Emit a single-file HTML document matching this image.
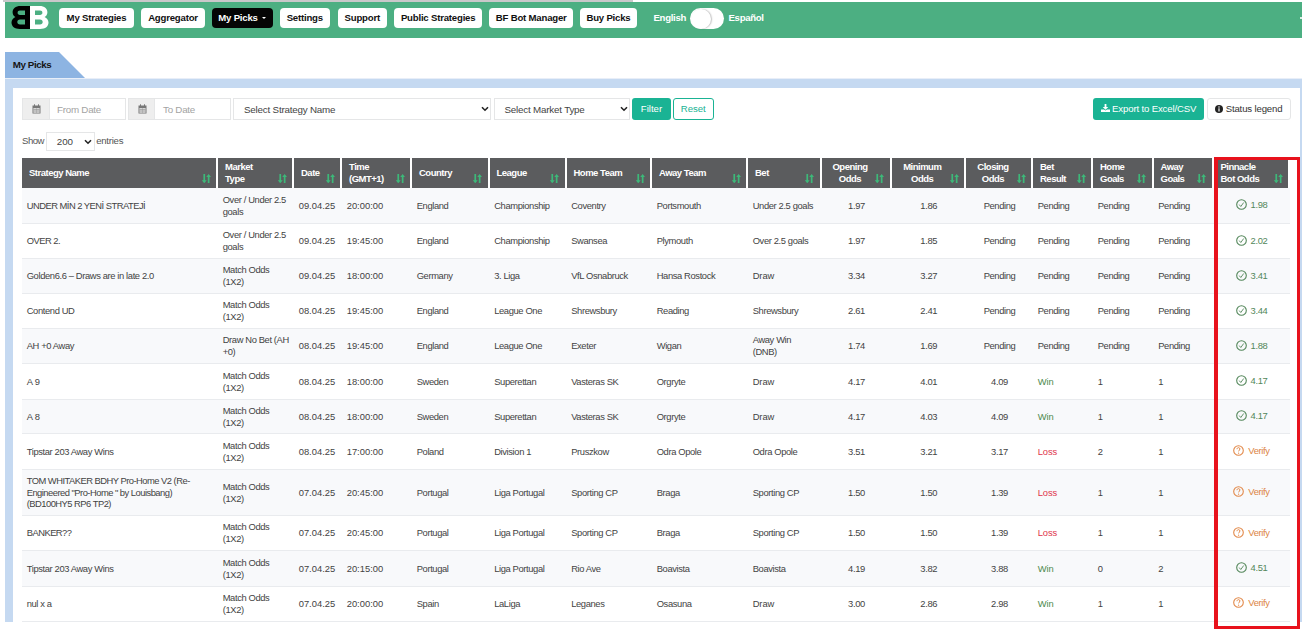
<!DOCTYPE html>
<html><head><meta charset="utf-8"><style>
*{box-sizing:border-box;margin:0;padding:0}
html,body{width:1308px;height:638px;overflow:hidden;background:#fff;font-family:"Liberation Sans",sans-serif;color:#555}
.abs{position:absolute}
#topbar{left:3px;top:0;width:630px;height:2px;background:#c9c8ca}
#nav{left:5px;top:2px;width:1297px;height:36px;background:#4caf82}
.nb{position:absolute;top:6px;height:20.5px;background:#fff;border-radius:4px;color:#111;font-weight:bold;font-size:9.6px;line-height:20.6px;text-align:center;letter-spacing:-0.2px}
.nb.act{background:#050505;color:#fff}
.lang{position:absolute;top:6px;color:#fff;font-weight:bold;font-size:9.6px;line-height:20px;letter-spacing:-0.3px}
#tog{left:685px;top:6.2px;width:33.5px;height:20.8px;border-radius:11px;background:#fff}
#knob{left:685.5px;top:6.5px;width:20px;height:20.2px;border-radius:50%;background:#fff;box-shadow:1px 0 1.5px rgba(0,0,0,.25)}
#tab{left:5px;top:52px;width:80px;height:26px;background:#8db4e2;clip-path:polygon(0 0,54px 0,80px 26px,0 26px)}
#tabt{left:12.7px;top:51.8px;line-height:26px;font-size:9.8px;font-weight:bold;color:#151515;letter-spacing:-0.4px}
#panel{left:5px;top:79px;width:1297px;height:560px;border-left:8px solid #c5d9f1;border-top:9px solid #c5d9f1;border-right:2px solid #c5d9f1;background:#fff}
#pbot{left:5px;top:622px;width:1297px;height:20px;background:#fff}
.ig{position:absolute;top:98px;height:22px;border:1px solid #e5e6e7;background:#fff}
.ad{position:absolute;left:0;top:0;bottom:0;background:#eee;border-right:1px solid #e5e6e7}
.ph{position:absolute;top:0;line-height:21.2px;font-size:9.8px;color:#a3a3a3;letter-spacing:-0.25px}
.sel{position:absolute;top:98px;height:22px;border:1px solid #e5e6e7;background:#fff;font-size:9.8px;color:#444;line-height:21.4px;letter-spacing:-0.2px}
.chev{position:absolute;top:7px;line-height:0}.chev svg{display:block}
.btn{position:absolute;top:98.3px;height:21.3px;border-radius:3px;font-size:9.6px;line-height:21.6px;text-align:center}
.tbl{position:absolute;left:22px;top:158px;width:1268px}
.hc{position:absolute;top:158px;height:30px;background:#5b5c5e;color:#fff;font-weight:bold;font-size:9.5px;line-height:12.2px;border-right:2px solid #fff;letter-spacing:-0.5px}
.hc .t{position:absolute;left:7px;top:2.9px}
.hc .t1{position:absolute;left:7px;top:9.3px}
.hc .si{position:absolute;right:5.2px;bottom:4.6px}
.row{position:absolute;left:22px;width:1268px;border-bottom:1px solid #e9ebee}
.row.odd{background:#f8f9fb}
.c{position:absolute;top:0;bottom:0;display:flex;align-items:center;font-size:9.4px;line-height:11.8px;padding-left:4.7px;padding-top:0.2px;color:#434343;letter-spacing:-0.35px}
.c.num{letter-spacing:0}
.c.ctr{letter-spacing:-0.3px}
.c.ctr{justify-content:center;padding-left:0;text-align:center}
.win{color:#4d8a4e}.loss{color:#e0334c}
.pk{justify-content:center;padding-left:0}
.pk svg{margin-right:3.4px;position:relative;top:-0.5px;left:-0.5px}
.pk{margin-top:-1px}
.okv{color:#53875a}.vv{color:#dc8444}
#red{left:1213.9px;top:156.7px;width:86px;height:471.9px;border-style:solid;border-color:#e8121c;border-width:3.5px 3.7px 3.7px 4.1px}
</style></head><body>
<div class="abs" id="topbar"></div>
<div class="abs" id="nav"></div>

<svg class="abs" style="left:11px;top:5.5px" width="38" height="23" viewBox="0 0 38 23">
<path d="M19 0H9.5C4.5 0 1.6 2.6 1.6 6.2c0 2.3 1.2 3.9 2.8 4.8C2.2 12 .5 14 .5 16.6c0 3.8 3 6.4 8.4 6.4H19z M9 4.5h5v4.4H9c-1.5 0-2.4-.9-2.4-2.2S7.5 4.5 9 4.5z M9 13.6h5v4.9H9c-1.7 0-2.7-1-2.7-2.45S7.3 13.6 9 13.6z" fill="#000" fill-rule="evenodd"/>
<path d="M19 0h9.5c5 0 7.9 2.6 7.9 6.2 0 2.3-1.2 3.9-2.8 4.8 2.2 1 3.9 3 3.9 5.6 0 3.8-3 6.4-8.4 6.4H19z M29 4.5h-5v4.4h5c1.5 0 2.4-.9 2.4-2.2S30.5 4.5 29 4.5z M29 13.6h-5v4.9h5c1.7 0 2.7-1 2.7-2.45S30.7 13.6 29 13.6z" fill="#fff" fill-rule="evenodd"/>
</svg>

<div class="nb" style="left:59px;top:7.6px;width:75px">My Strategies</div>
<div class="nb" style="left:141px;top:7.6px;width:64px">Aggregator</div>
<div class="nb act" style="left:212px;top:7.6px;width:60.5px">My Picks<span style="display:inline-block;width:0;height:0;border-left:2.2px solid transparent;border-right:2.2px solid transparent;border-top:2.6px solid #fff;margin-left:4.5px;vertical-align:1.8px"></span></div>
<div class="nb" style="left:279.5px;top:7.6px;width:50.5px">Settings</div>
<div class="nb" style="left:337.5px;top:7.6px;width:49.5px">Support</div>
<div class="nb" style="left:394px;top:7.6px;width:88.3px">Public Strategies</div>
<div class="nb" style="left:489.3px;top:7.6px;width:83.9px">BF Bot Manager</div>
<div class="nb" style="left:580.3px;top:7.6px;width:56.3px">Buy Picks</div>
<div class="lang" style="left:653.5px;top:8px">English</div>
<div class="abs" id="tog" style="left:690px;top:8.2px"></div><div class="abs" id="knob" style="left:690.5px;top:8.5px"></div>
<div class="lang" style="left:728.5px;top:8px">Español</div>
<div class="abs" style="left:1299.8px;top:17.3px;width:2.2px;height:1.8px;background:rgba(255,255,255,.8)"></div>
<div class="abs" id="tab"></div><div class="abs" id="tabt">My Picks</div>
<div class="abs" style="left:5px;top:78px;width:1297px;height:1px;background:#e8eef8"></div>
<div class="abs" id="panel"></div><div class="abs" id="pbot"></div>
<div class="ig" style="left:22px;width:103.5px"><div class="ad" style="width:26.5px"><span style="position:absolute;left:8.5px;top:5px;line-height:0"><svg width="9" height="10" viewBox="0 0 9 10"><rect x=".5" y="1.5" width="8" height="8" fill="#777"/><rect x="1.5" y="4" width="6" height="4.8" fill="#eee"/><path d="M1.5 5.5h6M1.5 7h6M3 4v5M4.5 4v5M6 4v5" stroke="#888" stroke-width=".5"/><rect x="2" y=".3" width="1" height="2" fill="#777"/><rect x="6" y=".3" width="1" height="2" fill="#777"/></svg></span></div><div class="ph" style="left:34px">From Date</div></div>
<div class="ig" style="left:128px;width:103px"><div class="ad" style="width:26px"><span style="position:absolute;left:8.5px;top:5px;line-height:0"><svg width="9" height="10" viewBox="0 0 9 10"><rect x=".5" y="1.5" width="8" height="8" fill="#777"/><rect x="1.5" y="4" width="6" height="4.8" fill="#eee"/><path d="M1.5 5.5h6M1.5 7h6M3 4v5M4.5 4v5M6 4v5" stroke="#888" stroke-width=".5"/><rect x="2" y=".3" width="1" height="2" fill="#777"/><rect x="6" y=".3" width="1" height="2" fill="#777"/></svg></span></div><div class="ph" style="left:34px">To Date</div></div>
<div class="sel" style="left:233px;width:258px"><span style="position:absolute;left:10px">Select Strategy Name</span><span class="chev" style="left:247px"><svg width="8" height="6" viewBox="0 0 8 6"><path d="M1 1.2l3 3 3-3" fill="none" stroke="#222" stroke-width="1.6"/></svg></span></div>
<div class="sel" style="left:493.5px;width:136.5px"><span style="position:absolute;left:10px">Select Market Type</span><span class="chev" style="left:125px"><svg width="8" height="6" viewBox="0 0 8 6"><path d="M1 1.2l3 3 3-3" fill="none" stroke="#222" stroke-width="1.6"/></svg></span></div>
<div class="btn" style="left:632.2px;width:38.5px;background:#1ab394;color:#fff">Filter</div>
<div class="btn" style="left:672.5px;width:41.5px;border:1px solid #1ab394;color:#1ab394;background:#fff;line-height:19.6px">Reset</div>
<div class="btn" style="left:1093px;width:111.3px;background:#1ab394;color:#fff"><svg width="9" height="8" viewBox="0 0 9 8" style="vertical-align:0px;margin-right:2px"><path d="M3.6 0h1.8v3h1.9L4.5 5.7 1.7 3h1.9z" fill="#fff"/><path d="M0 5.4h3l1.5 1.2L6 5.4h3V8H0z" fill="#fff"/></svg><span style="letter-spacing:-0.15px">Export to Excel/CSV</span></div>
<div class="btn" style="left:1207px;width:83.6px;border:1px solid #e5e6e7;color:#333;background:#fff;line-height:19.8px"><svg width="8" height="8" viewBox="0 0 9 9" style="vertical-align:-0.5px;margin-right:2.5px"><circle cx="4.5" cy="4.5" r="4.5" fill="#222"/><rect x="3.85" y="3.7" width="1.3" height="3.6" fill="#fff"/><circle cx="4.5" cy="2.3" r=".8" fill="#fff"/></svg><span style="letter-spacing:-0.15px">Status legend</span></div>
<div class="abs" style="left:22px;top:132px;line-height:18px;font-size:9.6px;color:#555;letter-spacing:-0.5px">Show</div>
<div class="abs" style="left:45.7px;top:132.2px;width:49px;height:18.5px;border:1px solid #e5e6e7;background:#fff"><span style="position:absolute;left:10px;top:0;line-height:17px;font-size:9.8px;color:#444">200</span><span style="position:absolute;left:37px;top:6px;line-height:0"><svg width="8" height="6" viewBox="0 0 8 6"><path d="M1 1.2l3 3 3-3" fill="none" stroke="#222" stroke-width="1.6"/></svg></span></div>
<div class="abs" style="left:96.2px;top:132px;line-height:18px;font-size:9.6px;color:#555;letter-spacing:-0.25px">entries</div>
<div class="hc" style="left:22px;width:196px"><div class="t1">Strategy Name</div><svg class="si" width="9" height="9.5" viewBox="0 0 9 9.5"><path d="M1.4 0h1.7v6.3h1.6L2.25 9.3-.2 6.3h1.6z M5.8 9.3h1.7V3h1.6L6.65 0 4.2 3h1.6z" fill="#3db879"/></svg></div>
<div class="hc" style="left:218px;width:76px"><div class="t">Market<br>Type</div><svg class="si" width="9" height="9.5" viewBox="0 0 9 9.5"><path d="M1.4 0h1.7v6.3h1.6L2.25 9.3-.2 6.3h1.6z M5.8 9.3h1.7V3h1.6L6.65 0 4.2 3h1.6z" fill="#3db879"/></svg></div>
<div class="hc" style="left:294px;width:48px"><div class="t1">Date</div><svg class="si" width="9" height="9.5" viewBox="0 0 9 9.5"><path d="M1.4 0h1.7v6.3h1.6L2.25 9.3-.2 6.3h1.6z M5.8 9.3h1.7V3h1.6L6.65 0 4.2 3h1.6z" fill="#3db879"/></svg></div>
<div class="hc" style="left:342px;width:70px"><div class="t">Time<br>(GMT+1)</div><svg class="si" width="9" height="9.5" viewBox="0 0 9 9.5"><path d="M1.4 0h1.7v6.3h1.6L2.25 9.3-.2 6.3h1.6z M5.8 9.3h1.7V3h1.6L6.65 0 4.2 3h1.6z" fill="#3db879"/></svg></div>
<div class="hc" style="left:412px;width:77.5px"><div class="t1">Country</div><svg class="si" width="9" height="9.5" viewBox="0 0 9 9.5"><path d="M1.4 0h1.7v6.3h1.6L2.25 9.3-.2 6.3h1.6z M5.8 9.3h1.7V3h1.6L6.65 0 4.2 3h1.6z" fill="#3db879"/></svg></div>
<div class="hc" style="left:489.5px;width:77px"><div class="t1">League</div><svg class="si" width="9" height="9.5" viewBox="0 0 9 9.5"><path d="M1.4 0h1.7v6.3h1.6L2.25 9.3-.2 6.3h1.6z M5.8 9.3h1.7V3h1.6L6.65 0 4.2 3h1.6z" fill="#3db879"/></svg></div>
<div class="hc" style="left:566.5px;width:85.5px"><div class="t1">Home Team</div><svg class="si" width="9" height="9.5" viewBox="0 0 9 9.5"><path d="M1.4 0h1.7v6.3h1.6L2.25 9.3-.2 6.3h1.6z M5.8 9.3h1.7V3h1.6L6.65 0 4.2 3h1.6z" fill="#3db879"/></svg></div>
<div class="hc" style="left:652px;width:96px"><div class="t1">Away Team</div><svg class="si" width="9" height="9.5" viewBox="0 0 9 9.5"><path d="M1.4 0h1.7v6.3h1.6L2.25 9.3-.2 6.3h1.6z M5.8 9.3h1.7V3h1.6L6.65 0 4.2 3h1.6z" fill="#3db879"/></svg></div>
<div class="hc" style="left:748px;width:73.5px"><div class="t1">Bet</div><svg class="si" width="9" height="9.5" viewBox="0 0 9 9.5"><path d="M1.4 0h1.7v6.3h1.6L2.25 9.3-.2 6.3h1.6z M5.8 9.3h1.7V3h1.6L6.65 0 4.2 3h1.6z" fill="#3db879"/></svg></div>
<div class="hc" style="left:821.5px;width:70px"><div class="t" style="left:7px;right:18px;text-align:center">Opening<br>Odds</div><svg class="si" width="9" height="9.5" viewBox="0 0 9 9.5"><path d="M1.4 0h1.7v6.3h1.6L2.25 9.3-.2 6.3h1.6z M5.8 9.3h1.7V3h1.6L6.65 0 4.2 3h1.6z" fill="#3db879"/></svg></div>
<div class="hc" style="left:891.5px;width:74.5px"><div class="t" style="left:7px;right:18px;text-align:center">Minimum<br>Odds</div><svg class="si" width="9" height="9.5" viewBox="0 0 9 9.5"><path d="M1.4 0h1.7v6.3h1.6L2.25 9.3-.2 6.3h1.6z M5.8 9.3h1.7V3h1.6L6.65 0 4.2 3h1.6z" fill="#3db879"/></svg></div>
<div class="hc" style="left:966px;width:67px"><div class="t" style="left:7px;right:18px;text-align:center">Closing<br>Odds</div><svg class="si" width="9" height="9.5" viewBox="0 0 9 9.5"><path d="M1.4 0h1.7v6.3h1.6L2.25 9.3-.2 6.3h1.6z M5.8 9.3h1.7V3h1.6L6.65 0 4.2 3h1.6z" fill="#3db879"/></svg></div>
<div class="hc" style="left:1033px;width:60px"><div class="t">Bet<br>Result</div><svg class="si" width="9" height="9.5" viewBox="0 0 9 9.5"><path d="M1.4 0h1.7v6.3h1.6L2.25 9.3-.2 6.3h1.6z M5.8 9.3h1.7V3h1.6L6.65 0 4.2 3h1.6z" fill="#3db879"/></svg></div>
<div class="hc" style="left:1093px;width:60.5px"><div class="t">Home<br>Goals</div><svg class="si" width="9" height="9.5" viewBox="0 0 9 9.5"><path d="M1.4 0h1.7v6.3h1.6L2.25 9.3-.2 6.3h1.6z M5.8 9.3h1.7V3h1.6L6.65 0 4.2 3h1.6z" fill="#3db879"/></svg></div>
<div class="hc" style="left:1153.5px;width:60px"><div class="t">Away<br>Goals</div><svg class="si" width="9" height="9.5" viewBox="0 0 9 9.5"><path d="M1.4 0h1.7v6.3h1.6L2.25 9.3-.2 6.3h1.6z M5.8 9.3h1.7V3h1.6L6.65 0 4.2 3h1.6z" fill="#3db879"/></svg></div>
<div class="hc" style="left:1213.5px;width:76.5px"><div class="t">Pinnacle<br>Bot Odds</div><svg class="si" width="9" height="9.5" viewBox="0 0 9 9.5"><path d="M1.4 0h1.7v6.3h1.6L2.25 9.3-.2 6.3h1.6z M5.8 9.3h1.7V3h1.6L6.65 0 4.2 3h1.6z" fill="#3db879"/></svg></div>
<div class="row odd" style="top:188px;height:36px">
<div class="c" style="left:0px;width:196px;letter-spacing:-0.52px"><div>UNDER MİN 2 YENİ STRATEJİ</div></div>
<div class="c" style="left:196px;width:76px;letter-spacing:-0.38px"><div>Over / Under 2.5<br>goals</div></div>
<div class="c num" style="left:272px;width:48px;letter-spacing:0px"><div>09.04.25</div></div>
<div class="c num" style="left:320px;width:70px;letter-spacing:0px"><div>20:00:00</div></div>
<div class="c" style="left:390px;width:77.5px;letter-spacing:-0.38px"><div>England</div></div>
<div class="c" style="left:467.5px;width:77px;letter-spacing:-0.38px"><div>Championship</div></div>
<div class="c" style="left:544.5px;width:85.5px;letter-spacing:-0.38px"><div>Coventry</div></div>
<div class="c" style="left:630px;width:96px;letter-spacing:-0.38px"><div>Portsmouth</div></div>
<div class="c" style="left:726px;width:73.5px;letter-spacing:-0.38px"><div>Under 2.5 goals</div></div>
<div class="c ctr num" style="left:799.5px;width:70px;letter-spacing:-0.3px"><div>1.97</div></div>
<div class="c ctr num" style="left:869.5px;width:74.5px;letter-spacing:-0.3px"><div>1.86</div></div>
<div class="c ctr" style="left:944px;width:67px;letter-spacing:-0.38px"><div>Pending</div></div>
<div class="c" style="left:1011px;width:60px;letter-spacing:-0.38px"><div>Pending</div></div>
<div class="c" style="left:1071px;width:60.5px;letter-spacing:-0.38px"><div>Pending</div></div>
<div class="c" style="left:1131.5px;width:60px;letter-spacing:-0.38px"><div>Pending</div></div>
<div class="c pk okv" style="left:1191.5px;width:76.5px"><svg width="11" height="11" viewBox="0 0 11 11"><circle cx="5.5" cy="5.5" r="4.8" fill="none" stroke="#53875a" stroke-width="1.1"/><path d="M3.2 5.6l1.6 1.9 2.9-4" fill="none" stroke="#53875a" stroke-width="0.9"/></svg>1.98</div>
</div>
<div class="row" style="top:224px;height:35px">
<div class="c" style="left:0px;width:196px;letter-spacing:-0.52px"><div>OVER 2.</div></div>
<div class="c" style="left:196px;width:76px;letter-spacing:-0.38px"><div>Over / Under 2.5<br>goals</div></div>
<div class="c num" style="left:272px;width:48px;letter-spacing:0px"><div>09.04.25</div></div>
<div class="c num" style="left:320px;width:70px;letter-spacing:0px"><div>19:45:00</div></div>
<div class="c" style="left:390px;width:77.5px;letter-spacing:-0.38px"><div>England</div></div>
<div class="c" style="left:467.5px;width:77px;letter-spacing:-0.38px"><div>Championship</div></div>
<div class="c" style="left:544.5px;width:85.5px;letter-spacing:-0.38px"><div>Swansea</div></div>
<div class="c" style="left:630px;width:96px;letter-spacing:-0.38px"><div>Plymouth</div></div>
<div class="c" style="left:726px;width:73.5px;letter-spacing:-0.38px"><div>Over 2.5 goals</div></div>
<div class="c ctr num" style="left:799.5px;width:70px;letter-spacing:-0.3px"><div>1.97</div></div>
<div class="c ctr num" style="left:869.5px;width:74.5px;letter-spacing:-0.3px"><div>1.85</div></div>
<div class="c ctr" style="left:944px;width:67px;letter-spacing:-0.38px"><div>Pending</div></div>
<div class="c" style="left:1011px;width:60px;letter-spacing:-0.38px"><div>Pending</div></div>
<div class="c" style="left:1071px;width:60.5px;letter-spacing:-0.38px"><div>Pending</div></div>
<div class="c" style="left:1131.5px;width:60px;letter-spacing:-0.38px"><div>Pending</div></div>
<div class="c pk okv" style="left:1191.5px;width:76.5px"><svg width="11" height="11" viewBox="0 0 11 11"><circle cx="5.5" cy="5.5" r="4.8" fill="none" stroke="#53875a" stroke-width="1.1"/><path d="M3.2 5.6l1.6 1.9 2.9-4" fill="none" stroke="#53875a" stroke-width="0.9"/></svg>2.02</div>
</div>
<div class="row odd" style="top:259px;height:35.3px">
<div class="c" style="left:0px;width:196px;letter-spacing:-0.38px"><div>Golden6.6 – Draws are in late 2.0</div></div>
<div class="c" style="left:196px;width:76px;letter-spacing:-0.38px"><div>Match Odds<br>(1X2)</div></div>
<div class="c num" style="left:272px;width:48px;letter-spacing:0px"><div>09.04.25</div></div>
<div class="c num" style="left:320px;width:70px;letter-spacing:0px"><div>18:00:00</div></div>
<div class="c" style="left:390px;width:77.5px;letter-spacing:-0.38px"><div>Germany</div></div>
<div class="c" style="left:467.5px;width:77px;letter-spacing:-0.38px"><div>3. Liga</div></div>
<div class="c" style="left:544.5px;width:85.5px;letter-spacing:-0.38px"><div>VfL Osnabruck</div></div>
<div class="c" style="left:630px;width:96px;letter-spacing:-0.38px"><div>Hansa Rostock</div></div>
<div class="c" style="left:726px;width:73.5px;letter-spacing:-0.1px"><div>Draw</div></div>
<div class="c ctr num" style="left:799.5px;width:70px;letter-spacing:-0.3px"><div>3.34</div></div>
<div class="c ctr num" style="left:869.5px;width:74.5px;letter-spacing:-0.3px"><div>3.27</div></div>
<div class="c ctr" style="left:944px;width:67px;letter-spacing:-0.38px"><div>Pending</div></div>
<div class="c" style="left:1011px;width:60px;letter-spacing:-0.38px"><div>Pending</div></div>
<div class="c" style="left:1071px;width:60.5px;letter-spacing:-0.38px"><div>Pending</div></div>
<div class="c" style="left:1131.5px;width:60px;letter-spacing:-0.38px"><div>Pending</div></div>
<div class="c pk okv" style="left:1191.5px;width:76.5px"><svg width="11" height="11" viewBox="0 0 11 11"><circle cx="5.5" cy="5.5" r="4.8" fill="none" stroke="#53875a" stroke-width="1.1"/><path d="M3.2 5.6l1.6 1.9 2.9-4" fill="none" stroke="#53875a" stroke-width="0.9"/></svg>3.41</div>
</div>
<div class="row" style="top:294.3px;height:34.5px">
<div class="c" style="left:0px;width:196px;letter-spacing:-0.38px"><div>Contend UD</div></div>
<div class="c" style="left:196px;width:76px;letter-spacing:-0.38px"><div>Match Odds<br>(1X2)</div></div>
<div class="c num" style="left:272px;width:48px;letter-spacing:0px"><div>08.04.25</div></div>
<div class="c num" style="left:320px;width:70px;letter-spacing:0px"><div>19:45:00</div></div>
<div class="c" style="left:390px;width:77.5px;letter-spacing:-0.38px"><div>England</div></div>
<div class="c" style="left:467.5px;width:77px;letter-spacing:-0.38px"><div>League One</div></div>
<div class="c" style="left:544.5px;width:85.5px;letter-spacing:-0.38px"><div>Shrewsbury</div></div>
<div class="c" style="left:630px;width:96px;letter-spacing:-0.38px"><div>Reading</div></div>
<div class="c" style="left:726px;width:73.5px;letter-spacing:-0.38px"><div>Shrewsbury</div></div>
<div class="c ctr num" style="left:799.5px;width:70px;letter-spacing:-0.3px"><div>2.61</div></div>
<div class="c ctr num" style="left:869.5px;width:74.5px;letter-spacing:-0.3px"><div>2.41</div></div>
<div class="c ctr" style="left:944px;width:67px;letter-spacing:-0.38px"><div>Pending</div></div>
<div class="c" style="left:1011px;width:60px;letter-spacing:-0.38px"><div>Pending</div></div>
<div class="c" style="left:1071px;width:60.5px;letter-spacing:-0.38px"><div>Pending</div></div>
<div class="c" style="left:1131.5px;width:60px;letter-spacing:-0.38px"><div>Pending</div></div>
<div class="c pk okv" style="left:1191.5px;width:76.5px"><svg width="11" height="11" viewBox="0 0 11 11"><circle cx="5.5" cy="5.5" r="4.8" fill="none" stroke="#53875a" stroke-width="1.1"/><path d="M3.2 5.6l1.6 1.9 2.9-4" fill="none" stroke="#53875a" stroke-width="0.9"/></svg>3.44</div>
</div>
<div class="row odd" style="top:328.8px;height:35.3px">
<div class="c" style="left:0px;width:196px;letter-spacing:-0.38px"><div>AH +0 Away</div></div>
<div class="c" style="left:196px;width:76px;letter-spacing:-0.38px"><div>Draw No Bet (AH<br>+0)</div></div>
<div class="c num" style="left:272px;width:48px;letter-spacing:0px"><div>08.04.25</div></div>
<div class="c num" style="left:320px;width:70px;letter-spacing:0px"><div>19:45:00</div></div>
<div class="c" style="left:390px;width:77.5px;letter-spacing:-0.38px"><div>England</div></div>
<div class="c" style="left:467.5px;width:77px;letter-spacing:-0.38px"><div>League One</div></div>
<div class="c" style="left:544.5px;width:85.5px;letter-spacing:-0.38px"><div>Exeter</div></div>
<div class="c" style="left:630px;width:96px;letter-spacing:-0.38px"><div>Wigan</div></div>
<div class="c" style="left:726px;width:73.5px;letter-spacing:-0.38px"><div>Away Win<br>(DNB)</div></div>
<div class="c ctr num" style="left:799.5px;width:70px;letter-spacing:-0.3px"><div>1.74</div></div>
<div class="c ctr num" style="left:869.5px;width:74.5px;letter-spacing:-0.3px"><div>1.69</div></div>
<div class="c ctr" style="left:944px;width:67px;letter-spacing:-0.38px"><div>Pending</div></div>
<div class="c" style="left:1011px;width:60px;letter-spacing:-0.38px"><div>Pending</div></div>
<div class="c" style="left:1071px;width:60.5px;letter-spacing:-0.38px"><div>Pending</div></div>
<div class="c" style="left:1131.5px;width:60px;letter-spacing:-0.38px"><div>Pending</div></div>
<div class="c pk okv" style="left:1191.5px;width:76.5px"><svg width="11" height="11" viewBox="0 0 11 11"><circle cx="5.5" cy="5.5" r="4.8" fill="none" stroke="#53875a" stroke-width="1.1"/><path d="M3.2 5.6l1.6 1.9 2.9-4" fill="none" stroke="#53875a" stroke-width="0.9"/></svg>1.88</div>
</div>
<div class="row" style="top:364.1px;height:35.9px">
<div class="c" style="left:0px;width:196px;letter-spacing:-0.1px"><div>A 9</div></div>
<div class="c" style="left:196px;width:76px;letter-spacing:-0.38px"><div>Match Odds<br>(1X2)</div></div>
<div class="c num" style="left:272px;width:48px;letter-spacing:0px"><div>08.04.25</div></div>
<div class="c num" style="left:320px;width:70px;letter-spacing:0px"><div>18:00:00</div></div>
<div class="c" style="left:390px;width:77.5px;letter-spacing:-0.38px"><div>Sweden</div></div>
<div class="c" style="left:467.5px;width:77px;letter-spacing:-0.38px"><div>Superettan</div></div>
<div class="c" style="left:544.5px;width:85.5px;letter-spacing:-0.38px"><div>Vasteras SK</div></div>
<div class="c" style="left:630px;width:96px;letter-spacing:-0.38px"><div>Orgryte</div></div>
<div class="c" style="left:726px;width:73.5px;letter-spacing:-0.1px"><div>Draw</div></div>
<div class="c ctr num" style="left:799.5px;width:70px;letter-spacing:-0.3px"><div>4.17</div></div>
<div class="c ctr num" style="left:869.5px;width:74.5px;letter-spacing:-0.3px"><div>4.01</div></div>
<div class="c ctr num" style="left:944px;width:67px;letter-spacing:-0.3px"><div>4.09</div></div>
<div class="c win" style="left:1011px;width:60px;letter-spacing:-0.1px"><div>Win</div></div>
<div class="c num" style="left:1071px;width:60.5px;letter-spacing:-0.3px"><div>1</div></div>
<div class="c num" style="left:1131.5px;width:60px;letter-spacing:-0.3px"><div>1</div></div>
<div class="c pk okv" style="left:1191.5px;width:76.5px"><svg width="11" height="11" viewBox="0 0 11 11"><circle cx="5.5" cy="5.5" r="4.8" fill="none" stroke="#53875a" stroke-width="1.1"/><path d="M3.2 5.6l1.6 1.9 2.9-4" fill="none" stroke="#53875a" stroke-width="0.9"/></svg>4.17</div>
</div>
<div class="row odd" style="top:400px;height:34.2px">
<div class="c" style="left:0px;width:196px;letter-spacing:-0.1px"><div>A 8</div></div>
<div class="c" style="left:196px;width:76px;letter-spacing:-0.38px"><div>Match Odds<br>(1X2)</div></div>
<div class="c num" style="left:272px;width:48px;letter-spacing:0px"><div>08.04.25</div></div>
<div class="c num" style="left:320px;width:70px;letter-spacing:0px"><div>18:00:00</div></div>
<div class="c" style="left:390px;width:77.5px;letter-spacing:-0.38px"><div>Sweden</div></div>
<div class="c" style="left:467.5px;width:77px;letter-spacing:-0.38px"><div>Superettan</div></div>
<div class="c" style="left:544.5px;width:85.5px;letter-spacing:-0.38px"><div>Vasteras SK</div></div>
<div class="c" style="left:630px;width:96px;letter-spacing:-0.38px"><div>Orgryte</div></div>
<div class="c" style="left:726px;width:73.5px;letter-spacing:-0.1px"><div>Draw</div></div>
<div class="c ctr num" style="left:799.5px;width:70px;letter-spacing:-0.3px"><div>4.17</div></div>
<div class="c ctr num" style="left:869.5px;width:74.5px;letter-spacing:-0.3px"><div>4.03</div></div>
<div class="c ctr num" style="left:944px;width:67px;letter-spacing:-0.3px"><div>4.09</div></div>
<div class="c win" style="left:1011px;width:60px;letter-spacing:-0.1px"><div>Win</div></div>
<div class="c num" style="left:1071px;width:60.5px;letter-spacing:-0.3px"><div>1</div></div>
<div class="c num" style="left:1131.5px;width:60px;letter-spacing:-0.3px"><div>1</div></div>
<div class="c pk okv" style="left:1191.5px;width:76.5px"><svg width="11" height="11" viewBox="0 0 11 11"><circle cx="5.5" cy="5.5" r="4.8" fill="none" stroke="#53875a" stroke-width="1.1"/><path d="M3.2 5.6l1.6 1.9 2.9-4" fill="none" stroke="#53875a" stroke-width="0.9"/></svg>4.17</div>
</div>
<div class="row" style="top:434.2px;height:35.8px">
<div class="c" style="left:0px;width:196px;letter-spacing:-0.38px"><div>Tipstar 203 Away Wins</div></div>
<div class="c" style="left:196px;width:76px;letter-spacing:-0.38px"><div>Match Odds<br>(1X2)</div></div>
<div class="c num" style="left:272px;width:48px;letter-spacing:0px"><div>08.04.25</div></div>
<div class="c num" style="left:320px;width:70px;letter-spacing:0px"><div>17:00:00</div></div>
<div class="c" style="left:390px;width:77.5px;letter-spacing:-0.38px"><div>Poland</div></div>
<div class="c" style="left:467.5px;width:77px;letter-spacing:-0.38px"><div>Division 1</div></div>
<div class="c" style="left:544.5px;width:85.5px;letter-spacing:-0.38px"><div>Pruszkow</div></div>
<div class="c" style="left:630px;width:96px;letter-spacing:-0.38px"><div>Odra Opole</div></div>
<div class="c" style="left:726px;width:73.5px;letter-spacing:-0.38px"><div>Odra Opole</div></div>
<div class="c ctr num" style="left:799.5px;width:70px;letter-spacing:-0.3px"><div>3.51</div></div>
<div class="c ctr num" style="left:869.5px;width:74.5px;letter-spacing:-0.3px"><div>3.21</div></div>
<div class="c ctr num" style="left:944px;width:67px;letter-spacing:-0.3px"><div>3.17</div></div>
<div class="c loss" style="left:1011px;width:60px;letter-spacing:-0.1px"><div>Loss</div></div>
<div class="c num" style="left:1071px;width:60.5px;letter-spacing:-0.3px"><div>2</div></div>
<div class="c num" style="left:1131.5px;width:60px;letter-spacing:-0.3px"><div>1</div></div>
<div class="c pk vv" style="left:1191.5px;width:76.5px"><svg width="11" height="11" viewBox="0 0 11 11"><circle cx="5.5" cy="5.5" r="4.8" fill="none" stroke="#e2894a" stroke-width="1.1"/><path d="M4 4.2c0-1 .7-1.6 1.5-1.6s1.5.6 1.5 1.4c0 1.1-1.4 1.2-1.4 2.4" fill="none" stroke="#e2894a" stroke-width="1"/><circle cx="5.6" cy="8.2" r=".6" fill="#e2894a"/></svg>Verify</div>
</div>
<div class="row odd" style="top:470px;height:46px">
<div class="c" style="left:0px;width:196px;letter-spacing:-0.52px"><div>TOM WHITAKER BDHY Pro-Home V2 (Re-<br>Engineered "Pro-Home " by Louisbang)<br>(BD100HY5 RP6 TP2)</div></div>
<div class="c" style="left:196px;width:76px;letter-spacing:-0.38px"><div>Match Odds<br>(1X2)</div></div>
<div class="c num" style="left:272px;width:48px;letter-spacing:0px"><div>07.04.25</div></div>
<div class="c num" style="left:320px;width:70px;letter-spacing:0px"><div>20:45:00</div></div>
<div class="c" style="left:390px;width:77.5px;letter-spacing:-0.38px"><div>Portugal</div></div>
<div class="c" style="left:467.5px;width:77px;letter-spacing:-0.38px"><div>Liga Portugal</div></div>
<div class="c" style="left:544.5px;width:85.5px;letter-spacing:-0.38px"><div>Sporting CP</div></div>
<div class="c" style="left:630px;width:96px;letter-spacing:-0.38px"><div>Braga</div></div>
<div class="c" style="left:726px;width:73.5px;letter-spacing:-0.38px"><div>Sporting CP</div></div>
<div class="c ctr num" style="left:799.5px;width:70px;letter-spacing:-0.3px"><div>1.50</div></div>
<div class="c ctr num" style="left:869.5px;width:74.5px;letter-spacing:-0.3px"><div>1.50</div></div>
<div class="c ctr num" style="left:944px;width:67px;letter-spacing:-0.3px"><div>1.39</div></div>
<div class="c loss" style="left:1011px;width:60px;letter-spacing:-0.1px"><div>Loss</div></div>
<div class="c num" style="left:1071px;width:60.5px;letter-spacing:-0.3px"><div>1</div></div>
<div class="c num" style="left:1131.5px;width:60px;letter-spacing:-0.3px"><div>1</div></div>
<div class="c pk vv" style="left:1191.5px;width:76.5px"><svg width="11" height="11" viewBox="0 0 11 11"><circle cx="5.5" cy="5.5" r="4.8" fill="none" stroke="#e2894a" stroke-width="1.1"/><path d="M4 4.2c0-1 .7-1.6 1.5-1.6s1.5.6 1.5 1.4c0 1.1-1.4 1.2-1.4 2.4" fill="none" stroke="#e2894a" stroke-width="1"/><circle cx="5.6" cy="8.2" r=".6" fill="#e2894a"/></svg>Verify</div>
</div>
<div class="row" style="top:516px;height:35.3px">
<div class="c" style="left:0px;width:196px;letter-spacing:-0.52px"><div>BANKER??</div></div>
<div class="c" style="left:196px;width:76px;letter-spacing:-0.38px"><div>Match Odds<br>(1X2)</div></div>
<div class="c num" style="left:272px;width:48px;letter-spacing:0px"><div>07.04.25</div></div>
<div class="c num" style="left:320px;width:70px;letter-spacing:0px"><div>20:45:00</div></div>
<div class="c" style="left:390px;width:77.5px;letter-spacing:-0.38px"><div>Portugal</div></div>
<div class="c" style="left:467.5px;width:77px;letter-spacing:-0.38px"><div>Liga Portugal</div></div>
<div class="c" style="left:544.5px;width:85.5px;letter-spacing:-0.38px"><div>Sporting CP</div></div>
<div class="c" style="left:630px;width:96px;letter-spacing:-0.38px"><div>Braga</div></div>
<div class="c" style="left:726px;width:73.5px;letter-spacing:-0.38px"><div>Sporting CP</div></div>
<div class="c ctr num" style="left:799.5px;width:70px;letter-spacing:-0.3px"><div>1.50</div></div>
<div class="c ctr num" style="left:869.5px;width:74.5px;letter-spacing:-0.3px"><div>1.50</div></div>
<div class="c ctr num" style="left:944px;width:67px;letter-spacing:-0.3px"><div>1.39</div></div>
<div class="c loss" style="left:1011px;width:60px;letter-spacing:-0.1px"><div>Loss</div></div>
<div class="c num" style="left:1071px;width:60.5px;letter-spacing:-0.3px"><div>1</div></div>
<div class="c num" style="left:1131.5px;width:60px;letter-spacing:-0.3px"><div>1</div></div>
<div class="c pk vv" style="left:1191.5px;width:76.5px"><svg width="11" height="11" viewBox="0 0 11 11"><circle cx="5.5" cy="5.5" r="4.8" fill="none" stroke="#e2894a" stroke-width="1.1"/><path d="M4 4.2c0-1 .7-1.6 1.5-1.6s1.5.6 1.5 1.4c0 1.1-1.4 1.2-1.4 2.4" fill="none" stroke="#e2894a" stroke-width="1"/><circle cx="5.6" cy="8.2" r=".6" fill="#e2894a"/></svg>Verify</div>
</div>
<div class="row odd" style="top:551.3px;height:35.3px">
<div class="c" style="left:0px;width:196px;letter-spacing:-0.38px"><div>Tipstar 203 Away Wins</div></div>
<div class="c" style="left:196px;width:76px;letter-spacing:-0.38px"><div>Match Odds<br>(1X2)</div></div>
<div class="c num" style="left:272px;width:48px;letter-spacing:0px"><div>07.04.25</div></div>
<div class="c num" style="left:320px;width:70px;letter-spacing:0px"><div>20:15:00</div></div>
<div class="c" style="left:390px;width:77.5px;letter-spacing:-0.38px"><div>Portugal</div></div>
<div class="c" style="left:467.5px;width:77px;letter-spacing:-0.38px"><div>Liga Portugal</div></div>
<div class="c" style="left:544.5px;width:85.5px;letter-spacing:-0.38px"><div>Rio Ave</div></div>
<div class="c" style="left:630px;width:96px;letter-spacing:-0.38px"><div>Boavista</div></div>
<div class="c" style="left:726px;width:73.5px;letter-spacing:-0.38px"><div>Boavista</div></div>
<div class="c ctr num" style="left:799.5px;width:70px;letter-spacing:-0.3px"><div>4.19</div></div>
<div class="c ctr num" style="left:869.5px;width:74.5px;letter-spacing:-0.3px"><div>3.82</div></div>
<div class="c ctr num" style="left:944px;width:67px;letter-spacing:-0.3px"><div>3.88</div></div>
<div class="c win" style="left:1011px;width:60px;letter-spacing:-0.1px"><div>Win</div></div>
<div class="c num" style="left:1071px;width:60.5px;letter-spacing:-0.3px"><div>0</div></div>
<div class="c num" style="left:1131.5px;width:60px;letter-spacing:-0.3px"><div>2</div></div>
<div class="c pk okv" style="left:1191.5px;width:76.5px"><svg width="11" height="11" viewBox="0 0 11 11"><circle cx="5.5" cy="5.5" r="4.8" fill="none" stroke="#53875a" stroke-width="1.1"/><path d="M3.2 5.6l1.6 1.9 2.9-4" fill="none" stroke="#53875a" stroke-width="0.9"/></svg>4.51</div>
</div>
<div class="row" style="top:586.6px;height:35.3px">
<div class="c" style="left:0px;width:196px;letter-spacing:-0.38px"><div>nul x a</div></div>
<div class="c" style="left:196px;width:76px;letter-spacing:-0.38px"><div>Match Odds<br>(1X2)</div></div>
<div class="c num" style="left:272px;width:48px;letter-spacing:0px"><div>07.04.25</div></div>
<div class="c num" style="left:320px;width:70px;letter-spacing:0px"><div>20:00:00</div></div>
<div class="c" style="left:390px;width:77.5px;letter-spacing:-0.38px"><div>Spain</div></div>
<div class="c" style="left:467.5px;width:77px;letter-spacing:-0.38px"><div>LaLiga</div></div>
<div class="c" style="left:544.5px;width:85.5px;letter-spacing:-0.38px"><div>Leganes</div></div>
<div class="c" style="left:630px;width:96px;letter-spacing:-0.38px"><div>Osasuna</div></div>
<div class="c" style="left:726px;width:73.5px;letter-spacing:-0.1px"><div>Draw</div></div>
<div class="c ctr num" style="left:799.5px;width:70px;letter-spacing:-0.3px"><div>3.00</div></div>
<div class="c ctr num" style="left:869.5px;width:74.5px;letter-spacing:-0.3px"><div>2.86</div></div>
<div class="c ctr num" style="left:944px;width:67px;letter-spacing:-0.3px"><div>2.98</div></div>
<div class="c win" style="left:1011px;width:60px;letter-spacing:-0.1px"><div>Win</div></div>
<div class="c num" style="left:1071px;width:60.5px;letter-spacing:-0.3px"><div>1</div></div>
<div class="c num" style="left:1131.5px;width:60px;letter-spacing:-0.3px"><div>1</div></div>
<div class="c pk vv" style="left:1191.5px;width:76.5px"><svg width="11" height="11" viewBox="0 0 11 11"><circle cx="5.5" cy="5.5" r="4.8" fill="none" stroke="#e2894a" stroke-width="1.1"/><path d="M4 4.2c0-1 .7-1.6 1.5-1.6s1.5.6 1.5 1.4c0 1.1-1.4 1.2-1.4 2.4" fill="none" stroke="#e2894a" stroke-width="1"/><circle cx="5.6" cy="8.2" r=".6" fill="#e2894a"/></svg>Verify</div>
</div>
<div class="abs" id="red"></div>
</body></html>
